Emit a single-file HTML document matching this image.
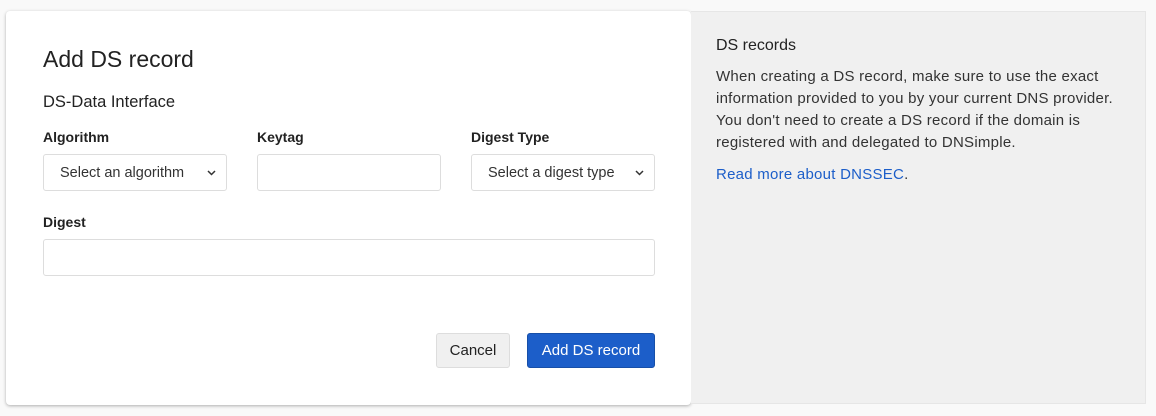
<!DOCTYPE html>
<html><head><style>
*{box-sizing:border-box;margin:0;padding:0}
body{width:1156px;height:416px;background:#f9f9f9;font-family:"Liberation Sans",sans-serif;color:#222;position:relative;overflow:hidden}
.card{position:absolute;left:6px;top:11px;width:685px;height:394px;background:#fff;border-radius:4px;box-shadow:0 1px 3px rgba(0,0,0,.3)}
.side{position:absolute;left:691px;top:11px;width:455px;height:393px;background:#f0f0f0;border:1px solid #e6e6e6;border-left:none}
.abs{position:absolute;white-space:nowrap}
h1{font-weight:normal;font-size:23px;color:#222}
.lbl{font-weight:bold;font-size:14px}
.inp{position:absolute;height:37px;border:1px solid #ddd;border-radius:3px;background:#fff;font-size:14.5px;color:#333}
.sel{padding-left:16px;line-height:37px}
.sel svg{position:absolute;right:10px;top:15px}
.btn{position:absolute;height:35px;border-radius:3px;font-size:15px;text-align:center;line-height:33px}
p{font-size:15px;letter-spacing:.25px;line-height:22px;color:#333}
</style></head><body>
<div class="card"></div>
<div class="side"></div>
<h1 class="abs" style="left:43px;top:46px">Add DS record</h1>
<div class="abs" style="left:43px;top:93px;font-size:16.5px">DS-Data Interface</div>
<div class="abs lbl" style="left:43px;top:129px">Algorithm</div>
<div class="abs lbl" style="left:257px;top:129px">Keytag</div>
<div class="abs lbl" style="left:471px;top:129px">Digest Type</div>
<div class="inp sel" style="left:43px;top:154px;width:184px">Select an algorithm<svg width="9" height="6" viewBox="0 0 9 6"><path d="M1 1l3.5 3.5L8 1" fill="none" stroke="#333" stroke-width="1.5"/></svg></div>
<div class="inp" style="left:257px;top:154px;width:184px"></div>
<div class="inp sel" style="left:471px;top:154px;width:184px">Select a digest type<svg width="9" height="6" viewBox="0 0 9 6"><path d="M1 1l3.5 3.5L8 1" fill="none" stroke="#333" stroke-width="1.5"/></svg></div>
<div class="abs lbl" style="left:43px;top:214px">Digest</div>
<div class="inp" style="left:43px;top:239px;width:612px"></div>
<div class="btn" style="left:436px;top:333px;width:74px;background:#f0f0f0;border:1px solid #ddd;color:#222">Cancel</div>
<div class="btn" style="left:527px;top:333px;width:128px;background:#1c5ec9;border:1px solid #174fa8;color:#fff">Add DS record</div>
<div class="abs" style="left:716px;top:37px;font-size:16px;color:#222">DS records</div>
<p class="abs" style="left:716px;top:66px">When creating a DS record, make sure to use the exact<br>information provided to you by your current DNS provider.<br>You don't need to create a DS record if the domain is<br>registered with and delegated to DNSimple.</p>
<p class="abs" style="left:716px;top:164px"><span style="color:#1c5ec9">Read more about DNSSEC</span>.</p>
</body></html>
